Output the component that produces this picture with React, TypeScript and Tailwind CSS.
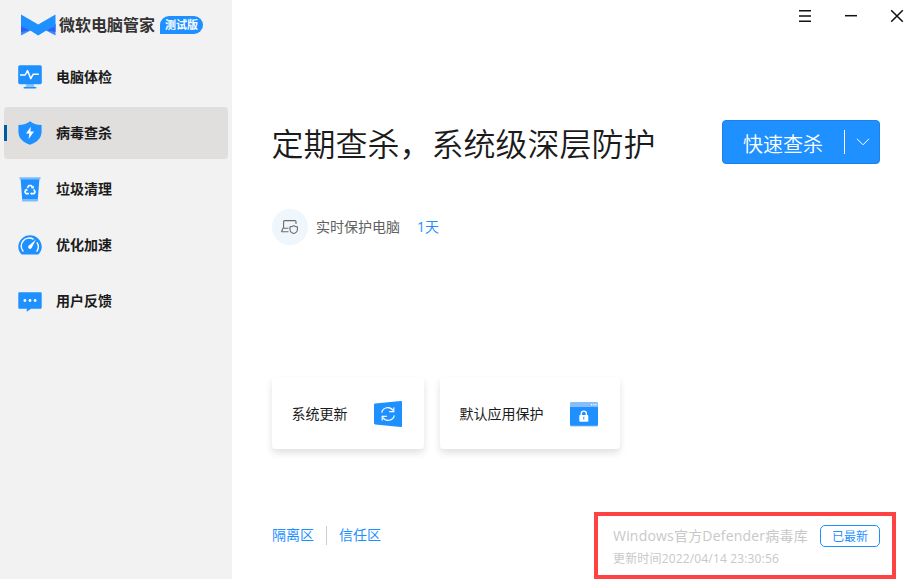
import type { ReactNode } from "react";
import clsx from "clsx";

const Logo = () => (
  <svg width="36" height="24" viewBox="0 0 36 24" className="shrink-0">
    <path d="M1 11v11.500L11.500 17ZM35.500 11v11.500L25 17Z" fill="#3d8bfa" />
    <path d="M1 11v8L9.500 17.500ZM35.500 11v8L27 17.500Z" fill="#2b62f5" />
    <path d="M1 1.500 18.200 11.500 35.500 1.500v11.700l-8 3.500L18.200 22.600 9 16.700 1 13.200Z" fill="#1e90ff" />
  </svg>
);

const MonitorIcon = () => (
  <svg width="24" height="24" viewBox="0 0 24 24">
    <path d="M8.500 19h7l1 3h-9Z" fill="#8cc4fb" />
    <rect x="5.500" y="22" width="13" height="1.600" rx=".8" fill="#1e90ff" />
    <rect x=".2" y=".2" width="23.600" height="19" rx="1.600" fill="#1e90ff" />
    <path d="M2 10h5.200l2.300-4.400 3.300 8 2.400-4.400h5.600" fill="none" stroke="#fff" strokeWidth="1.500" strokeLinejoin="round" />
  </svg>
);

const ShieldIcon = () => (
  <svg width="24" height="24" viewBox="0 0 24 24">
    <path d="M12 .2c2.600 2.200 6.500 3.600 11.600 3.800v6.500c0 6.500-4.300 10.700-11.600 13.300C4.700 21.200.4 17 .4 10.500V4C5.500 3.800 9.400 2.400 12 .2Z" fill="#1e90ff" />
    <path d="M12.800 5.800 8 12.600h3.300L10.600 18l5.400-7.400h-3.500Z" fill="#fff" />
  </svg>
);

const BinIcon = () => (
  <svg width="24" height="26" viewBox="0 0 24 26">
    <path d="M2.600 3h18.800l-1.700 21.500H4.300Z" fill="#1e90ff" />
    <path d="M1.300 1.200h21.400l-.4 2.400H1.700Z" fill="#7dbcfb" />
    <path d="M4.200 23h15.600l-.2 2.500H4.400Z" fill="#7dbcfb" />
    <g fill="none" stroke="#fff" strokeWidth="1.700" strokeLinejoin="round">
      <path d="M9.400 11.900 10.900 9.500h2.200l1.500 2.300" />
      <path d="m15.800 13.300 1.300 2.600-1 1.700h-2.700" />
      <path d="M10.900 17.600H8l-1.100-1.700 1.400-2.600" />
    </g>
    <path d="m13 12.300 2.900.2-.1-2.900ZM13.800 16.200v2.900l-1.900-1.500ZM6.500 13.900l2.600-1.500.6 2.600Z" fill="#fff" />
  </svg>
);

const GaugeIcon = () => (
  <svg width="24" height="20" viewBox="0 0 24 20">
    <path d="M3.600 19.500C1.500 17.400.3 14.900.3 12a11.700 11.700 0 0 1 23.400 0c0 2.900-1.200 5.400-3.300 7.500Z" fill="#1e90ff" />
    <path d="M5.400 16.600A8 8 0 0 1 15.600 4.400M18.900 7.400a8 8 0 0 1-.3 9.200" fill="none" stroke="#fff" strokeWidth="1.400" />
    <path d="m17.800 4.800-3.900 7.700a1.900 1.900 0 1 1-2.600-2.200Z" fill="#fff" />
  </svg>
);

const FeedbackIcon = () => (
  <svg width="24" height="20" viewBox="0 0 24 20" className="mt-px">
    <path d="M1.600.3h20.800c.8 0 1.300.5 1.300 1.300v13.800c0 .8-.5 1.300-1.300 1.300H13l-4.200 3v-3H1.600c-.8 0-1.300-.5-1.300-1.300V1.600C.3.800.8.3 1.600.3Z" fill="#1e90ff" />
    <circle cx="6.900" cy="8.500" r="1.400" fill="#fff" />
    <circle cx="12" cy="8.500" r="1.400" fill="#fff" />
    <circle cx="17.100" cy="8.500" r="1.400" fill="#fff" />
  </svg>
);

const LaptopShieldIcon = () => (
  <svg width="18" height="16" viewBox="0 0 18 16" fill="none" stroke="#6b6b6b" strokeWidth="1.100">
    <path d="M7.500 12.800H1.200c-.5 0-.7-.4-.5-.9L2 9.300h5.500M2.600 9V2.800c0-.8.400-1.200 1.200-1.200h10c.8 0 1.200.4 1.200 1.200v2.300" />
    <path d="M12.700 6.600c1 .8 2.200 1.200 3.700 1.300v2.500c0 2-1.300 3.300-3.700 4.200C10.300 13.700 9 12.400 9 10.400V7.900c1.500-.1 2.700-.5 3.700-1.300Z" />
  </svg>
);

const UpdateIcon = () => (
  <svg width="28" height="28" viewBox="0 0 28 28" className="mt-0.5">
    <path d="M1.200 3.500 26.800 1c.8 0 1.200.4 1.200 1.100v23.800c0 .7-.4 1.100-1.200 1.100L1.200 24.500C.4 24.400 0 24 0 23.300V4.700c0-.7.4-1.100 1.200-1.200Z" fill="#1e90ff" />
    <g fill="none" stroke="#fff" strokeWidth="1.200">
      <path d="M7.700 12.600A6.200 6.200 0 0 1 19 10.500M20.300 15.400A6.200 6.200 0 0 1 9 17.500" />
      <path d="M19.800 7.400v4.200h-4.600M8.200 20.600v-4.200h4.600" />
    </g>
  </svg>
);

const AppLockIcon = () => (
  <svg width="28" height="26" viewBox="0 0 28 26" className="mt-0.5">
    <rect y="2" width="28" height="23.800" rx="1.500" fill="#b7dafd" />
    <path d="M0 5h28v18.500c0 .9-.6 1.300-1.500 1.300h-25C.6 24.800 0 24.400 0 23.500Z" fill="#1e90ff" />
    <path d="M1.500 1h25c1 0 1.500.6 1.500 1.500V6H0V2.500C0 1.600.5 1 1.500 1Z" fill="#85befa" />
    <path d="M21 3h1.200v1.200H21ZM23.200 3h1.200v1.200h-1.200ZM25.300 3h1.200v1.200h-1.200Z" fill="#fff" />
    <rect x="9.300" y="14" width="9" height="6.800" rx=".8" fill="#fff" />
    <path d="M11.200 14v-1.200a2.600 2.600 0 0 1 5.200 0V14" fill="none" stroke="#fff" strokeWidth="1.300" />
    <path d="M13.300 15.800h1v2.600h-1Z" fill="#1e90ff" />
  </svg>
);

const navItems = [
  { label: "电脑体检", icon: <MonitorIcon /> },
  { label: "病毒查杀", icon: <ShieldIcon />, active: true },
  { label: "垃圾清理", icon: <BinIcon /> },
  { label: "优化加速", icon: <GaugeIcon /> },
  { label: "用户反馈", icon: <FeedbackIcon /> },
];

const Sidebar = () => (
  <aside className="flex w-[232px] shrink-0 flex-col bg-[#f2f2f2]">
    <div className="flex h-[51px] items-center pb-0.5 pl-5">
      <Logo />
      <span className="ml-[3px] text-[16px] leading-none font-bold whitespace-nowrap text-[#333]">微软电脑管家</span>
      <span className="ml-[5px] flex h-[18px] w-[43px] items-center justify-center rounded-[9px] rounded-bl-none bg-[#1e90ff] text-[11px] leading-none font-bold text-white">
        测试版
      </span>
    </div>
    <nav className="flex flex-col gap-1 px-1">
      {navItems.map(({ label, icon, active }) => (
        <button key={label} className={clsx("flex h-[52px] items-center rounded", active && "bg-[#e0dfde]")}>
          <span className={clsx("h-4 w-[3px]", active && "bg-[#005a9e]")} />
          <span className="ml-[11px] flex w-6 justify-center">{icon}</span>
          <span className="ml-3.5 text-sm font-bold text-[#1b1b1b]">{label}</span>
        </button>
      ))}
    </nav>
  </aside>
);

const WindowControls = () => (
  <div className="flex h-8 items-center justify-end gap-8 pr-4">
    <svg width="14" height="14" viewBox="0 0 14 14" fill="none" stroke="#111" strokeWidth="1.500">
      <path d="M1 1.700h12M1 7h12M1 12.300h12" />
    </svg>
    <svg width="14" height="14" viewBox="0 0 14 14" fill="none" stroke="#111" strokeWidth="1.500">
      <path d="M1 6.700h12" />
    </svg>
    <svg width="14" height="14" viewBox="0 0 14 14" fill="none" stroke="#111" strokeWidth="1.500">
      <path d="m1.200 1.200 11.600 11.600M12.800 1.200 1.200 12.800" />
    </svg>
  </div>
);

const Card = ({ label, icon, className }: { label: string; icon: ReactNode; className: string }) => (
  <button
    className={clsx(
      "flex h-[72px] items-center justify-between rounded bg-white pr-[22px] pl-[19.5px] text-sm text-[#1b1b1b] shadow-[0_4px_7px_rgba(0,0,0,0.12)]",
      className,
    )}
  >
    <span className="pt-0.5">{label}</span>
    {icon}
  </button>
);

const Footer = () => (
  <footer className="flex h-[67px] justify-between pl-10">
    <div className="flex h-[46px] items-center text-sm text-[#1e90ff]">
      <span>隔离区</span>
      <span className="mx-3 h-[19px] w-px bg-[#ccc]" />
      <span>信任区</span>
    </div>
    <div className="mr-6 w-[302px] border-4 border-[#ff4343] pt-[9px] pl-[15px] text-[#c8c8c8]">
      <div className="flex h-[22px] items-center justify-between pr-3">
        <span className="text-sm tracking-[0.2px] whitespace-nowrap">Windows官方Defender病毒库</span>
        <span className="flex h-[22px] w-[60px] items-center justify-center rounded-[5px] border border-[#1e90ff] pt-px text-xs text-[#1e90ff]">
          已最新
        </span>
      </div>
      <p className="mt-1 text-xs tracking-[0.16px]">更新时间2022/04/14 23:30:56</p>
    </div>
  </footer>
);

export default function App() {
  return (
    <div className="flex h-[579px] w-[920px] overflow-hidden bg-white font-['Open_Sans','Noto_Sans_CJK_SC',sans-serif]">
      <Sidebar />
      <main className="flex min-w-0 flex-1 flex-col">
        <WindowControls />
        <div className="mt-[88px] flex h-11 items-center justify-between pr-10 pl-[39.5px]">
          <h1 className="pb-px font-['Noto_Sans_CJK_SC',sans-serif] text-[32px] leading-none font-[350] whitespace-nowrap text-[#1b1b1b]">
            定期查杀，系统级深层防护
          </h1>
          <button className="flex h-11 w-[158px] items-center rounded border border-[#1a82e8] bg-[#1e90ff] pl-5 text-white">
            <span className="pt-1 font-['Noto_Sans_CJK_SC',sans-serif] text-xl leading-none font-[350]">快速查杀</span>
            <span className="ml-[21px] h-6 w-px bg-white" />
            <svg width="14" height="8" viewBox="0 0 14 8" className="ml-[11px]" fill="none" stroke="#fff">
              <path d="m1 .8 6 6 6-6" />
            </svg>
          </button>
        </div>
        <div className="mt-[45px] flex h-9 items-center pl-10 text-sm">
          <span className="flex size-9 items-center justify-center rounded-full bg-[#eff6fc]">
            <LaptopShieldIcon />
          </span>
          <span className="ml-2 text-[#616161]">实时保护电脑</span>
          <span className="ml-[17px] text-[#1e90ff]">1天</span>
        </div>
        <div className="mt-[132px] flex gap-4 pl-10">
          <Card label="系统更新" icon={<UpdateIcon />} className="w-[152px]" />
          <Card label="默认应用保护" icon={<AppLockIcon />} className="w-[180px]" />
        </div>
        <div className="flex-1" />
        <Footer />
      </main>
    </div>
  );
}
